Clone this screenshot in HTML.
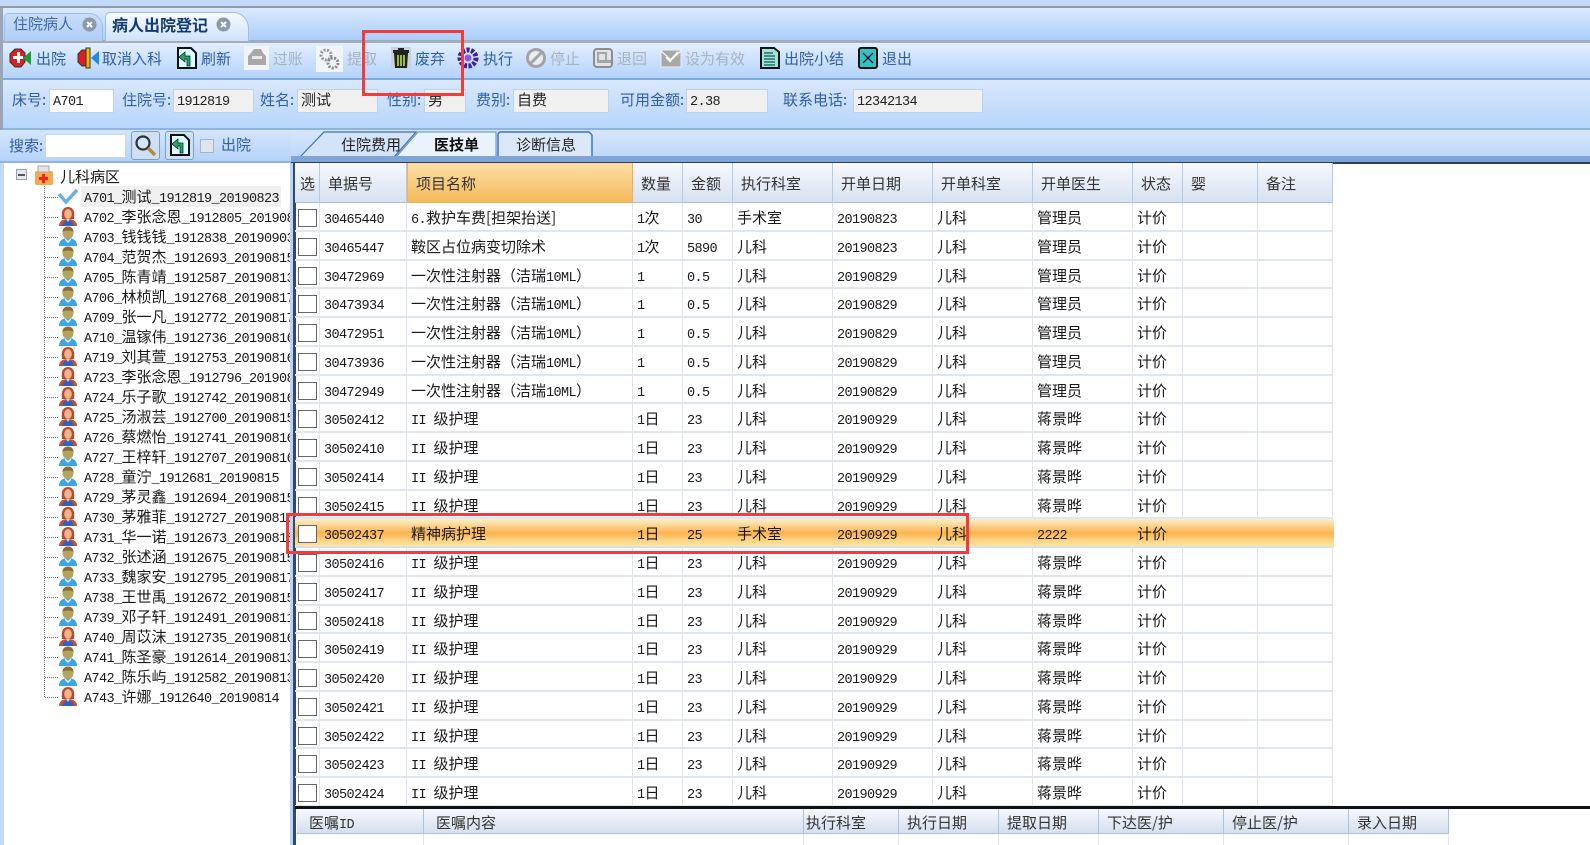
<!DOCTYPE html>
<html lang="zh"><head><meta charset="utf-8"><title>病人出院登记</title>
<style>
*{box-sizing:border-box;margin:0;padding:0}
html,body{width:1590px;height:845px;overflow:hidden;background:#fff}
body{position:relative;font:15px/20px "Noto Sans CJK SC","WenQuanYi Zen Hei",sans-serif;color:#1a1a1a;filter:blur(.35px)}
i{font:normal 13.5px/20px "Liberation Mono",monospace;letter-spacing:-.6px;white-space:pre}
.a{position:absolute}
.tb{top:49px;color:#2f5fa8;white-space:nowrap}
.tb.d{color:#a9b2bf}
.ic{position:absolute;top:47px;width:22px;height:22px}
.lb{position:absolute;top:90px;color:#2f5fa8;white-space:nowrap}
.in{position:absolute;top:89px;height:24px;background:#f0f0f0;border:1.5px solid #bcd2ee;padding-left:3px;line-height:20px;color:#222;white-space:nowrap}
.tree{left:0;top:163px;width:290px;height:682px;background:#fff;overflow:hidden}
.n{position:absolute;left:84px;height:20px;white-space:nowrap}
.n svg{position:absolute;left:-26px;top:-1px;width:20px;height:21px}
.n:before{content:"";position:absolute;left:-39px;top:10px;width:13px;border-top:1px dotted #777}
.g{position:absolute;left:295px;top:163px;width:1039px}
.r{display:grid;grid-template-columns:25px 87px 226px 50px 50px 100px 100px 100px 100px 50px 75px 75px;height:28.75px}
.r span{border-right:1.5px solid #dfe6f2;border-bottom:2px solid #dfe6f2;padding-left:4px;line-height:30px;white-space:nowrap;overflow:hidden;position:relative}
.r span:first-child:after{content:"";position:absolute;left:3px;top:6px;width:17px;height:16px;background:#fff;border:1.5px solid #666}
.h{height:40px;grid-template-columns:25px 87px 226px 50px 50px 100px 100px 100px 100px 50px 75px 75px}
.h span{background:linear-gradient(#f7f9fe,#d7e1f0);border-right:1.5px solid #b5cbe2;border-bottom:1.5px solid #a8c2dd;line-height:42px;padding-left:8px;color:#333}
.h span:first-child{padding-left:5px}
.h span:first-child:after{display:none}
.h span.s{background:linear-gradient(#fcdfa6,#f5ba5a);border-left:1.5px solid #f0b060;border-right:1.5px solid #f0b060;border-bottom-color:#f2b055;padding-left:8px}
.hl{background:linear-gradient(#fdeec6 0,#fdd898 20%,#fdb350 48%,#fdd688 75%,#fdeaa8 100%)}
.hl span{background:none;border-right-color:transparent;border-bottom-color:#d8e0ee}
.b{position:absolute;top:809px;height:25px;background:linear-gradient(#f5f8fd,#d6e0ef);border-right:1.5px solid #a9c3de;border-bottom:1.5px solid #a9c3de;line-height:27px;padding-left:12px;color:#333;white-space:nowrap}
.c{position:absolute;top:834px;height:11px;border-right:1.5px solid #dfe6f2}
.rd{position:absolute;border:3px solid #f23c3c}
</style></head><body>
<svg width="0" height="0" style="position:absolute"><defs>
<symbol id="m" viewBox="0 0 20 21"><path d="M1 20c0-6 4-8 9-8s9 2 9 8z" fill="#3aa6e8"/><path d="M7 12l3 3 3-3v2l-3 3-3-3z" fill="#fff"/><ellipse cx="10" cy="7" rx="5.5" ry="6" fill="#b4a35a"/><path d="M4.500 6c0-4 3-5.500 5.500-5.500S15.500 2 15.500 6c-2-2-9-2-11 0z" fill="#8a6a3a"/></symbol>
<symbol id="f" viewBox="0 0 20 21"><path d="M4 13C3 5 5 1 10 1s7 4 6 12z" fill="#b8492e"/><path d="M1 20c0-5 4-7 9-7s9 2 9 7z" fill="#c8502e"/><path d="M4 20c1-4 3-6 6-6s5 2 6 6z" fill="#2f62c0"/><ellipse cx="10" cy="8" rx="3.800" ry="5" fill="#eeb48a"/><path d="M8 13h4l-2 3z" fill="#f5c9a5"/></symbol>
</defs></svg>

<!-- top bands -->
<div class="a" style="left:0;top:0;width:1590px;height:6px;background:#c3dafa"></div>
<div class="a" style="left:0;top:6px;width:1590px;height:2.500px;background:#8f9aa8"></div>
<div class="a" style="left:0;top:8px;width:1590px;height:33px;background:linear-gradient(#dbe9fd,#a9cdfb)"></div>
<div class="a" style="left:0;top:40px;width:1590px;height:3px;background:#a3adba"></div>
<div class="a" style="left:0;top:43px;width:1590px;height:36px;background:linear-gradient(#e2eefe,#b3d2fb)"></div>
<div class="a" style="left:0;top:78px;width:1590px;height:2px;background:#7ea9dc"></div>
<div class="a" style="left:0;top:80px;width:1590px;height:49px;background:linear-gradient(#d9e8fc,#b6d4fb)"></div>
<div class="a" style="left:0;top:128px;width:1590px;height:2px;background:#8fb4e3"></div>
<div class="a" style="left:0;top:8px;width:3px;height:155px;background:#9aa6b5"></div>

<!-- doc tabs -->
<div class="a" style="left:4px;top:13px;width:99px;height:28px;background:linear-gradient(#c9ddf8,#aecdf5);border:1px solid #9fbfe8;border-bottom:0;border-radius:5px 14px 0 0"></div>
<div class="a" style="left:13px;top:14px;color:#3f6aa8">住院病人</div>
<svg class="a" style="left:82px;top:17px" width="15" height="15"><circle cx="7.500" cy="7.500" r="7" fill="#8a98ac"/><path d="M5 5l5 5M10 5l-5 5" stroke="#fff" stroke-width="2"/></svg>
<div class="a" style="left:105px;top:12px;width:144px;height:29px;background:linear-gradient(#f6fafe,#cfe2fb);border:1px solid #9fbfe8;border-bottom:0;border-radius:5px 16px 0 0"></div>
<div class="a" style="left:112px;top:14px;color:#123a72;font-weight:700;font-size:16px">病人出院登记</div>
<svg class="a" style="left:216px;top:17px" width="15" height="15"><circle cx="7.500" cy="7.500" r="7" fill="#8a98ac"/><path d="M5 5l5 5M10 5l-5 5" stroke="#fff" stroke-width="2"/></svg>

<!-- toolbar -->
<svg class="ic" style="left:9px" viewBox="0 0 22 22"><path d="M6 2h6l4 4v9l-4 5H6l-5-5V7z" fill="#d92020" stroke="#333"/><path d="M8 5h3v4h3v3h-3v4H8v-4H4V9h4z" fill="#fff"/><path d="M22 4v14l-8-7z" fill="#1f9a3a"/></svg>
<div class="tb a" style="left:36px">出院</div>
<svg class="ic" style="left:77px" viewBox="0 0 22 22"><path d="M5 3h5v16H5L1 15V7z" fill="#d92020" stroke="#333"/><rect x="9" y="1" width="4" height="20" fill="#f2b600" stroke="#333"/><path d="M22 4v14l-8-7z" fill="#1f88e8"/></svg>
<div class="tb a" style="left:102px">取消入科</div>
<svg class="ic" style="left:176px" viewBox="0 0 22 22"><path d="M2 1h13l5 5v15H2z" fill="#dff" stroke="#111" stroke-width="2"/><path d="M14 19V9H9V5L3 10l6 5v-3h2v7z" fill="#22aa55" stroke="#114" stroke-width=".7"/></svg>
<div class="tb a" style="left:201px">刷新</div>
<div class="a" style="left:244px;top:46px;width:25px;height:24px;background:#f1f4f8"></div>
<svg class="ic" style="left:246px" viewBox="0 0 22 22"><path d="M5 6l3-4h7l2 4 3 3v9H2v-9z" fill="#a9a9a9"/><path d="M6 9h10v3H6z" fill="#e8e8e8"/></svg>
<div class="tb d a" style="left:273px">过账</div>
<div class="a" style="left:316px;top:46px;width:27px;height:26px;background:#f1f4f8"></div>
<svg class="ic" style="left:318px;top:48px" viewBox="0 0 22 22"><circle cx="8" cy="7" r="5" fill="none" stroke="#999" stroke-width="3" stroke-dasharray="2 1.500"/><circle cx="15" cy="15" r="5" fill="none" stroke="#888" stroke-width="3" stroke-dasharray="2 1.500"/></svg>
<div class="tb d a" style="left:347px">提取</div>
<svg class="ic" style="left:390px" viewBox="0 0 22 22"><rect width="20" height="22" x="1" fill="#c9d3dc"/><path d="M8 1h6v2h5v3H3V3h5z" fill="#222"/><path d="M4 6h14l-1 15H5z" fill="#222"/><path d="M7 8h2v11H7zM10 8h2v11h-2zM13 8h2v11h-2z" fill="#9abf20"/></svg>
<div class="tb a" style="left:415px">废弃</div>
<svg class="ic" style="left:457px" viewBox="0 0 22 22"><circle cx="11" cy="11" r="8" fill="none" stroke="#3a1fa0" stroke-width="5" stroke-dasharray="3 1.500"/><circle cx="11" cy="11" r="3.500" fill="#8a5ad8"/></svg>
<div class="tb a" style="left:483px">执行</div>
<svg class="ic" style="left:525px" viewBox="0 0 22 22"><circle cx="11" cy="11" r="8.500" fill="#e8edf2" stroke="#a3a3a3" stroke-width="3"/><path d="M5 17L17 5" stroke="#a3a3a3" stroke-width="3"/></svg>
<div class="tb d a" style="left:550px">停止</div>
<svg class="ic" style="left:592px" viewBox="0 0 22 22"><rect x="2" y="2" width="18" height="18" rx="3" fill="#dfe4ea" stroke="#8d8d8d" stroke-width="2"/><path d="M5 5h10v8h4v3H5z" fill="#a5a5a5"/><path d="M7 7h6v6H7z" fill="#dfe4ea"/></svg>
<div class="tb d a" style="left:617px">退回</div>
<svg class="ic" style="left:660px" viewBox="0 0 22 22"><rect x="1" y="3" width="20" height="17" fill="#a8a8a8" stroke="#eee"/><path d="M1 4l10 9 10-9" fill="none" stroke="#eee" stroke-width="1.500"/><path d="M6 10l4 4 8-9" fill="none" stroke="#fff" stroke-width="2"/></svg>
<div class="tb d a" style="left:685px">设为有效</div>
<svg class="ic" style="left:759px" viewBox="0 0 22 22"><path d="M2 1h13l5 4v16H2z" fill="#9fe6d8" stroke="#111" stroke-width="2"/><path d="M5 6h9M5 9h11M5 12h11M5 15h11M5 18h11" stroke="#155" stroke-width="1.200"/></svg>
<div class="tb a" style="left:784px">出院小结</div>
<svg class="ic" style="left:857px" viewBox="0 0 22 22"><rect x="2" y="1" width="18" height="20" rx="2" fill="#2ec4c4" stroke="#111" stroke-width="2"/><path d="M6 6l10 10M16 6L6 16" stroke="#113" stroke-width="1.300"/></svg>
<div class="tb a" style="left:882px">退出</div>

<!-- info -->
<div class="lb" style="left:12px">床号:</div><div class="in" style="left:49px;width:65px;background:#fff"><i>A701</i></div>
<div class="lb" style="left:122px">住院号:</div><div class="in" style="left:173px;width:81px"><i>1912819</i></div>
<div class="lb" style="left:260px">姓名:</div><div class="in" style="left:297px;width:81px">测试</div>
<div class="lb" style="left:387px">性别:</div><div class="in" style="left:424px;width:42px">男</div>
<div class="lb" style="left:476px">费别:</div><div class="in" style="left:513px;width:96px">自费</div>
<div class="lb" style="left:620px">可用金额:</div><div class="in" style="left:686px;width:82px"><i>2.38</i></div>
<div class="lb" style="left:783px">联系电话:</div><div class="in" style="left:853px;width:130px"><i>12342134</i></div>

<!-- search row -->
<div class="a" style="left:0;top:130px;width:291px;height:33px;background:linear-gradient(#d5e5fb,#b5d3fa);border-bottom:2px solid #8fb4e3"></div>
<div class="a" style="left:9px;top:136px;color:#2f5fa8">搜索:</div>
<div class="a" style="left:45px;top:134px;width:81px;height:24px;background:#fff;border:1px solid #c5d8f0"></div>
<div class="a" style="left:131px;top:131px;width:29px;height:29px;background:#cfe0f5;border:1.500px solid #7f9cc4;border-radius:3px"></div>
<svg class="a" style="left:134px;top:134px" width="23" height="23"><circle cx="9" cy="9" r="6.500" fill="#cfe7ff" stroke="#333" stroke-width="2.200"/><path d="M14 14l7 7" stroke="#b58a3a" stroke-width="3.500"/></svg>
<div class="a" style="left:165px;top:131px;width:29px;height:29px;background:#cfe0f5;border:1.500px solid #7f9cc4;border-radius:3px"></div>
<svg class="a" style="left:169px;top:134px" width="22" height="22" viewBox="0 0 22 22"><path d="M2 1h13l5 5v15H2z" fill="#dff" stroke="#111" stroke-width="2"/><path d="M14 19V9H9V5L3 10l6 5v-3h2v7z" fill="#22aa55" stroke="#114" stroke-width=".7"/></svg>
<div class="a" style="left:200px;top:139px;width:14px;height:14px;background:#dfe5ec;border:1.500px solid #a9b4c2"></div>
<div class="a" style="left:221px;top:135px;color:#2f5fa8">出院</div>

<!-- right tabs -->
<div class="a" style="left:291px;top:130px;width:1299px;height:28px;background:linear-gradient(#d6e6fb,#bcd8fb)"></div>
<svg class="a" style="left:296px;top:130px" width="310" height="30"><path d="M4 27L28 2h92l-22 25z" fill="#d3e4fa" stroke="#3f6fae" stroke-width="1.200"/><path d="M100 27l22-25h78v25z" fill="#eaf2fd" stroke="#5c8ac5" stroke-width="1"/><path d="M202 27V5q0-3 3-3h88l3 3v22z" fill="#dbe8fa" stroke="#3f75bd" stroke-width="1.500"/></svg>
<div class="a" style="left:341px;top:135px;color:#222">住院费用</div>
<div class="a" style="left:434px;top:135px;font-weight:700;color:#111">医技单</div>
<div class="a" style="left:516px;top:135px;color:#222">诊断信息</div>
<div class="a" style="left:291px;top:156px;width:1299px;height:6px;background:#7fa5d8"></div>
<div class="a" style="left:291px;top:162px;width:1299px;height:1.500px;background:#2c3e58"></div>

<!-- tree -->
<div class="a tree">
<div class="a" style="left:0;top:0;width:4px;height:682px;background:#c4d9f5"></div>
<div class="a" style="left:44px;top:20px;height:514px;border-left:1px dotted #777"></div>
<div class="a" style="left:16px;top:6px;width:11px;height:11px;background:#e5e9ee;border:1px solid #98a0aa"></div>
<div class="a" style="left:18px;top:11px;width:7px;height:1.500px;background:#556"></div>
<svg class="a" style="left:34px;top:2px" width="20" height="21"><rect x="1" y="6" width="18" height="14" rx="2" fill="#f3a94e"/><rect x="4" y="1" width="11" height="6" fill="#e4e4e4" stroke="#aaa"/><path d="M8 9h3v3h3v3h-3v3H8v-3H5v-3h3z" fill="#e22"/></svg>
<div class="a" style="left:60px;top:4px">儿科病区</div>
<div class="a" style="left:81px;top:23px;width:200px;height:21px;background:#f0f0f0"></div>
<div class="n" style="top:23.500px"><svg viewBox="0 0 20 21"><path d="M1 8l7 8L19 4" fill="none" stroke="#6ab0e0" stroke-width="3.500"/></svg><i>A701_</i>测试<i>_1912819_20190823</i></div>
<div class="n" style="top:43.500px"><svg><use href="#f"/></svg><i>A702_</i>李张念恩<i>_1912805_20190816</i></div>
<div class="n" style="top:63.500px"><svg><use href="#m"/></svg><i>A703_</i>钱钱钱<i>_1912838_20190903</i></div>
<div class="n" style="top:83.500px"><svg><use href="#m"/></svg><i>A704_</i>范贺杰<i>_1912693_20190815</i></div>
<div class="n" style="top:103.500px"><svg><use href="#m"/></svg><i>A705_</i>陈青靖<i>_1912587_20190813</i></div>
<div class="n" style="top:123.500px"><svg><use href="#m"/></svg><i>A706_</i>林桢凯<i>_1912768_20190817</i></div>
<div class="n" style="top:143.500px"><svg><use href="#m"/></svg><i>A709_</i>张一凡<i>_1912772_20190817</i></div>
<div class="n" style="top:163.500px"><svg><use href="#m"/></svg><i>A710_</i>温镓伟<i>_1912736_20190816</i></div>
<div class="n" style="top:183.500px"><svg><use href="#f"/></svg><i>A719_</i>刘其萱<i>_1912753_20190816</i></div>
<div class="n" style="top:203.500px"><svg><use href="#f"/></svg><i>A723_</i>李张念恩<i>_1912796_20190816</i></div>
<div class="n" style="top:223.500px"><svg><use href="#f"/></svg><i>A724_</i>乐子歌<i>_1912742_20190816</i></div>
<div class="n" style="top:243.500px"><svg><use href="#f"/></svg><i>A725_</i>汤淑芸<i>_1912700_20190815</i></div>
<div class="n" style="top:263.500px"><svg><use href="#f"/></svg><i>A726_</i>蔡燃怡<i>_1912741_20190816</i></div>
<div class="n" style="top:283.500px"><svg><use href="#m"/></svg><i>A727_</i>王梓轩<i>_1912707_20190816</i></div>
<div class="n" style="top:303.500px"><svg><use href="#m"/></svg><i>A728_</i>童泞<i>_1912681_20190815</i></div>
<div class="n" style="top:323.500px"><svg><use href="#f"/></svg><i>A729_</i>茅灵鑫<i>_1912694_20190815</i></div>
<div class="n" style="top:343.500px"><svg><use href="#f"/></svg><i>A730_</i>茅雅菲<i>_1912727_20190816</i></div>
<div class="n" style="top:363.500px"><svg><use href="#f"/></svg><i>A731_</i>华一诺<i>_1912673_20190815</i></div>
<div class="n" style="top:383.500px"><svg><use href="#m"/></svg><i>A732_</i>张述涵<i>_1912675_20190815</i></div>
<div class="n" style="top:403.500px"><svg><use href="#m"/></svg><i>A733_</i>魏家安<i>_1912795_20190817</i></div>
<div class="n" style="top:423.500px"><svg><use href="#m"/></svg><i>A738_</i>王世禹<i>_1912672_20190815</i></div>
<div class="n" style="top:443.500px"><svg><use href="#m"/></svg><i>A739_</i>邓子轩<i>_1912491_20190811</i></div>
<div class="n" style="top:463.500px"><svg><use href="#f"/></svg><i>A740_</i>周苡沫<i>_1912735_20190816</i></div>
<div class="n" style="top:483.500px"><svg><use href="#m"/></svg><i>A741_</i>陈圣豪<i>_1912614_20190813</i></div>
<div class="n" style="top:503.500px"><svg><use href="#m"/></svg><i>A742_</i>陈乐屿<i>_1912582_20190813</i></div>
<div class="n" style="top:523.500px"><svg><use href="#f"/></svg><i>A743_</i>许娜<i>_1912640_20190814</i></div>
</div>
<div class="a" style="left:290px;top:163px;width:3px;height:682px;background:#bcd4f3"></div>
<div class="a" style="left:293px;top:162px;width:2.500px;height:683px;background:#2f4a72"></div>

<!-- main grid -->
<div class="g">
<div class="r h"><span>选</span><span>单据号</span><span class="s">项目名称</span><span>数量</span><span>金额</span><span>执行科室</span><span>开单日期</span><span>开单科室</span><span>开单医生</span><span>状态</span><span>婴</span><span>备注</span></div>
<div class="r"><span></span><span><i>30465440</i></span><span><i>6.</i>救护车费[担架抬送]</span><span><i>1</i>次</span><span><i>30</i></span><span>手术室</span><span><i>20190823</i></span><span>儿科</span><span>管理员</span><span>计价</span><span></span><span></span></div>
<div class="r"><span></span><span><i>30465447</i></span><span>鞍区占位病变切除术</span><span><i>1</i>次</span><span><i>5890</i></span><span>儿科</span><span><i>20190823</i></span><span>儿科</span><span>管理员</span><span>计价</span><span></span><span></span></div>
<div class="r"><span></span><span><i>30472969</i></span><span>一次性注射器（洁瑞<i>10ML</i>）</span><span><i>1</i></span><span><i>0.5</i></span><span>儿科</span><span><i>20190829</i></span><span>儿科</span><span>管理员</span><span>计价</span><span></span><span></span></div>
<div class="r"><span></span><span><i>30473934</i></span><span>一次性注射器（洁瑞<i>10ML</i>）</span><span><i>1</i></span><span><i>0.5</i></span><span>儿科</span><span><i>20190829</i></span><span>儿科</span><span>管理员</span><span>计价</span><span></span><span></span></div>
<div class="r"><span></span><span><i>30472951</i></span><span>一次性注射器（洁瑞<i>10ML</i>）</span><span><i>1</i></span><span><i>0.5</i></span><span>儿科</span><span><i>20190829</i></span><span>儿科</span><span>管理员</span><span>计价</span><span></span><span></span></div>
<div class="r"><span></span><span><i>30473936</i></span><span>一次性注射器（洁瑞<i>10ML</i>）</span><span><i>1</i></span><span><i>0.5</i></span><span>儿科</span><span><i>20190829</i></span><span>儿科</span><span>管理员</span><span>计价</span><span></span><span></span></div>
<div class="r"><span></span><span><i>30472949</i></span><span>一次性注射器（洁瑞<i>10ML</i>）</span><span><i>1</i></span><span><i>0.5</i></span><span>儿科</span><span><i>20190829</i></span><span>儿科</span><span>管理员</span><span>计价</span><span></span><span></span></div>
<div class="r"><span></span><span><i>30502412</i></span><span><i>II </i>级护理</span><span><i>1</i>日</span><span><i>23</i></span><span>儿科</span><span><i>20190929</i></span><span>儿科</span><span>蒋景晔</span><span>计价</span><span></span><span></span></div>
<div class="r"><span></span><span><i>30502410</i></span><span><i>II </i>级护理</span><span><i>1</i>日</span><span><i>23</i></span><span>儿科</span><span><i>20190929</i></span><span>儿科</span><span>蒋景晔</span><span>计价</span><span></span><span></span></div>
<div class="r"><span></span><span><i>30502414</i></span><span><i>II </i>级护理</span><span><i>1</i>日</span><span><i>23</i></span><span>儿科</span><span><i>20190929</i></span><span>儿科</span><span>蒋景晔</span><span>计价</span><span></span><span></span></div>
<div class="r"><span></span><span><i>30502415</i></span><span><i>II </i>级护理</span><span><i>1</i>日</span><span><i>23</i></span><span>儿科</span><span><i>20190929</i></span><span>儿科</span><span>蒋景晔</span><span>计价</span><span></span><span></span></div>
<div class="r hl"><span></span><span><i>30502437</i></span><span>精神病护理</span><span><i>1</i>日</span><span><i>25</i></span><span>手术室</span><span><i>20190929</i></span><span>儿科</span><span><i>2222</i></span><span>计价</span><span></span><span></span></div>
<div class="r"><span></span><span><i>30502416</i></span><span><i>II </i>级护理</span><span><i>1</i>日</span><span><i>23</i></span><span>儿科</span><span><i>20190929</i></span><span>儿科</span><span>蒋景晔</span><span>计价</span><span></span><span></span></div>
<div class="r"><span></span><span><i>30502417</i></span><span><i>II </i>级护理</span><span><i>1</i>日</span><span><i>23</i></span><span>儿科</span><span><i>20190929</i></span><span>儿科</span><span>蒋景晔</span><span>计价</span><span></span><span></span></div>
<div class="r"><span></span><span><i>30502418</i></span><span><i>II </i>级护理</span><span><i>1</i>日</span><span><i>23</i></span><span>儿科</span><span><i>20190929</i></span><span>儿科</span><span>蒋景晔</span><span>计价</span><span></span><span></span></div>
<div class="r"><span></span><span><i>30502419</i></span><span><i>II </i>级护理</span><span><i>1</i>日</span><span><i>23</i></span><span>儿科</span><span><i>20190929</i></span><span>儿科</span><span>蒋景晔</span><span>计价</span><span></span><span></span></div>
<div class="r"><span></span><span><i>30502420</i></span><span><i>II </i>级护理</span><span><i>1</i>日</span><span><i>23</i></span><span>儿科</span><span><i>20190929</i></span><span>儿科</span><span>蒋景晔</span><span>计价</span><span></span><span></span></div>
<div class="r"><span></span><span><i>30502421</i></span><span><i>II </i>级护理</span><span><i>1</i>日</span><span><i>23</i></span><span>儿科</span><span><i>20190929</i></span><span>儿科</span><span>蒋景晔</span><span>计价</span><span></span><span></span></div>
<div class="r"><span></span><span><i>30502422</i></span><span><i>II </i>级护理</span><span><i>1</i>日</span><span><i>23</i></span><span>儿科</span><span><i>20190929</i></span><span>儿科</span><span>蒋景晔</span><span>计价</span><span></span><span></span></div>
<div class="r"><span></span><span><i>30502423</i></span><span><i>II </i>级护理</span><span><i>1</i>日</span><span><i>23</i></span><span>儿科</span><span><i>20190929</i></span><span>儿科</span><span>蒋景晔</span><span>计价</span><span></span><span></span></div>
<div class="r"><span></span><span><i>30502424</i></span><span><i>II </i>级护理</span><span><i>1</i>日</span><span><i>23</i></span><span>儿科</span><span><i>20190929</i></span><span>儿科</span><span>蒋景晔</span><span>计价</span><span></span><span></span></div>
</div>

<!-- bottom grid -->
<div class="a" style="left:295px;top:806px;width:1295px;height:3px;background:#111"></div>
<div class="a" style="left:295.500px;top:809px;width:1295px;height:36px;background:#fff"></div>
<div class="b" style="left:297px;width:127px">医嘱<i>ID</i></div>
<div class="b" style="left:424px;width:380px">医嘱内容</div>
<div class="b" style="left:804px;width:95px;padding-left:2px">执行科室</div>
<div class="b" style="left:899px;width:100px;padding-left:8px">执行日期</div>
<div class="b" style="left:999px;width:100px;padding-left:8px">提取日期</div>
<div class="b" style="left:1099px;width:125px;padding-left:8px">下达医/护</div>
<div class="b" style="left:1224px;width:125px;padding-left:8px">停止医/护</div>
<div class="b" style="left:1349px;width:100px;padding-left:8px">录入日期</div>
<div class="c" style="left:297px;width:127px"></div><div class="c" style="left:424px;width:380px"></div><div class="c" style="left:804px;width:95px"></div><div class="c" style="left:899px;width:100px"></div><div class="c" style="left:999px;width:100px"></div><div class="c" style="left:1099px;width:125px"></div><div class="c" style="left:1224px;width:125px"></div><div class="c" style="left:1349px;width:100px"></div>

<!-- red annotations -->
<div class="rd" style="left:362px;top:30px;width:102px;height:66px"></div>
<div class="rd" style="left:286px;top:513px;width:683px;height:41px"></div>
</body></html>
